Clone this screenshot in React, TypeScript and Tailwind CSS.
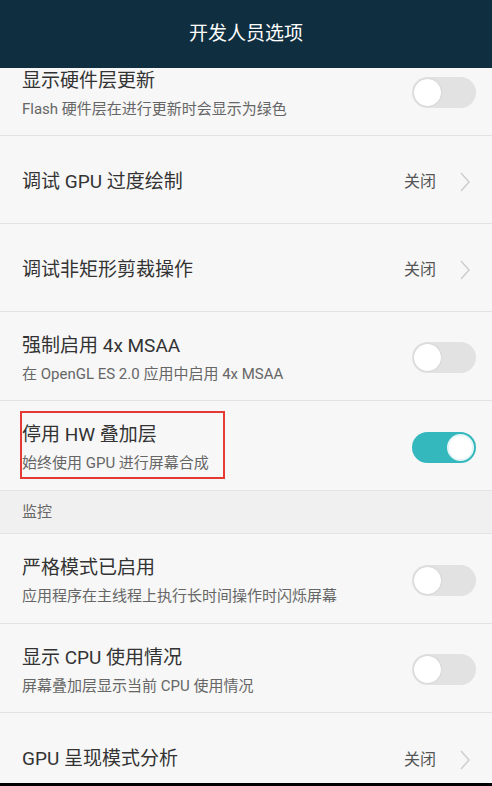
import React from "react";

const font = { fontFamily: "Roboto, 'Noto Sans CJK SC', sans-serif" };

function Toggle({ on }: { on?: boolean }) {
  return on ? (
    <div className="w-[64px] h-[31px] rounded-full bg-[#35b8bd] flex items-center justify-end pr-[2px] shrink-0">
      <div className="w-[27px] h-[27px] rounded-full bg-white border-[2px] border-[#e6f6f7]" />
    </div>
  ) : (
    <div className="w-[64px] h-[31px] rounded-full bg-[#e2e2e2] flex items-center pl-[2px] shrink-0">
      <div className="w-[27px] h-[27px] rounded-full bg-white shadow-[0_0_2px_rgba(0,0,0,0.15)]" />
    </div>
  );
}

function Chevron() {
  return (
    <svg width="14" height="22" viewBox="0 0 14 22" className="shrink-0">
      <path d="M3 2 L11 11 L3 20" fill="none" stroke="#cfcfcf" strokeWidth="1.6" />
    </svg>
  );
}

function SwitchRow({ title, sub, on, boxed, tall }: { title: string; sub: string; on?: boolean; boxed?: boolean; tall?: boolean }) {
  return (
    <div className={(tall ? "h-[90px]" : "h-[89px]") + " flex items-center justify-between pl-[22px] pr-[16px] border-b border-[#e3e3e3]"}>
      <div className={"pt-[5px]" + (boxed ? " relative" : "")}>
        <div className="text-[19px] leading-[26px] text-[#333]">{title}</div>
        <div className="text-[15px] leading-[22px] text-[#666] mt-[4px]">{sub}</div>
        {boxed && (
          <div className="absolute left-[-2px] top-[-6px] w-[205px] h-[68px] border-2 border-[#e53935]" />
        )}
      </div>
      <div className="pt-[3px]">
        <Toggle on={on} />
      </div>
    </div>
  );
}

function ValueRow({ title, last }: { title: string; last?: boolean }) {
  return (
    <div className={"h-[88px] flex items-center justify-between pl-[22px] pr-[20px] pt-[5px]" + (last ? "" : " border-b border-[#e3e3e3]")}>
      <div className="text-[19px] text-[#333]">{title}</div>
      <div className="flex items-center gap-[22px]">
        <span className="text-[16px] text-[#555]">关闭</span>
        <Chevron />
      </div>
    </div>
  );
}

export default function App() {
  return (
    <div style={font} className="w-[492px] h-[786px] bg-[#f7f7f7] flex flex-col overflow-hidden">
      <div className="h-[68px] bg-[#0f2e3f] flex items-center justify-center shrink-0">
        <span className="text-white text-[19px]">开发人员选项</span>
      </div>
      <div className="flex-1 overflow-hidden">
        <div className="-mt-[21px]">
          <SwitchRow title="显示硬件层更新" sub="Flash 硬件层在进行更新时会显示为绿色" />
          <ValueRow title="调试 GPU 过度绘制" />
          <ValueRow title="调试非矩形剪裁操作" />
          <SwitchRow title="强制启用 4x MSAA" sub="在 OpenGL ES 2.0 应用中启用 4x MSAA" />
          <SwitchRow title="停用 HW 叠加层" sub="始终使用 GPU 进行屏幕合成" on boxed tall />
          <div className="h-[43px] bg-[#f0f0f0] flex items-center pl-[22px] border-b border-[#e3e3e3]">
            <span className="text-[15px] text-[#666]">监控</span>
          </div>
          <SwitchRow title="严格模式已启用" sub="应用程序在主线程上执行长时间操作时闪烁屏幕" tall />
          <SwitchRow title="显示 CPU 使用情况" sub="屏幕叠加层显示当前 CPU 使用情况" />
          <ValueRow title="GPU 呈现模式分析" last />
        </div>
      </div>
      <div className="h-[3px] bg-black shrink-0" />
    </div>
  );
}
